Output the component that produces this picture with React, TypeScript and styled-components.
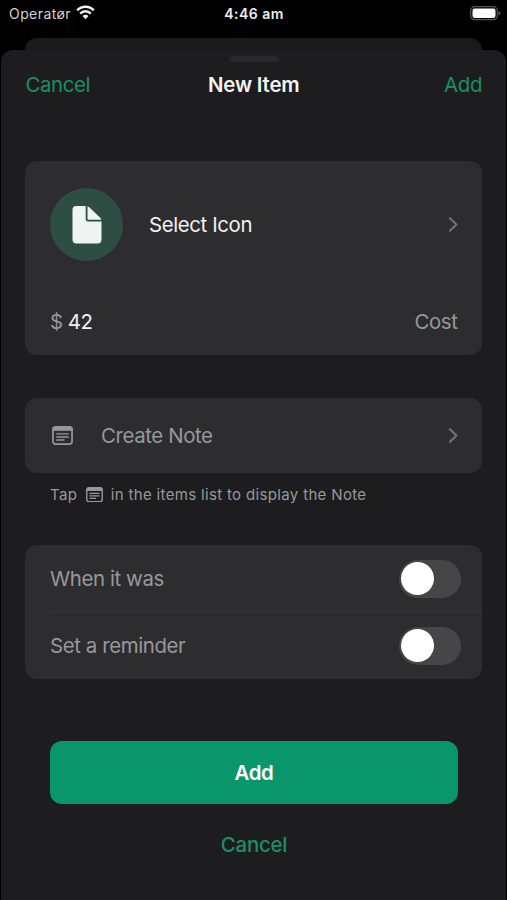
import React, { useState } from "react";
import styled, { createGlobalStyle } from "styled-components";

const GlobalStyle = createGlobalStyle`
  * { box-sizing: border-box; }
  body { margin: 0; background: #000; }
  button { font: inherit; letter-spacing: inherit; border: 0; padding: 0; background: none; }
`;

const Screen = styled.div`
  width: 507px;
  height: 900px;
  overflow: hidden;
  display: flex;
  flex-direction: column;
  background: #000;
  color: #f5f5f6;
  font-family: Inter, "Liberation Sans", sans-serif;
  font-size: 20.4px;
  line-height: 26px;
  letter-spacing: -0.38px;
`;

const StatusBar = styled.header`
  height: 38px;
  flex: none;
  display: grid;
  grid-template-columns: 1fr auto 1fr;
  align-items: start;
  padding: 4px 6px 0 7px;
  font-size: 14px;
  line-height: 20px;
  svg { display: block; }
`;
const Carrier = styled.div`
  display: flex;
  gap: 5px;
  padding-left: 2px;
  color: #d2d2d2;
  letter-spacing: 0.42px;
  svg { margin-top: 1px; }
`;
const Clock = styled.div`
  font-weight: 600;
  color: #eee;
  letter-spacing: 0.45px;
`;
const BatterySlot = styled.div`
  justify-self: end;
  padding-top: 2px;
`;

const BackSheet = styled.div`
  height: 12px;
  flex: none;
  margin: 0 25px;
  border-radius: 12px 12px 0 0;
  background: #1a1a1b;
`;
const Sheet = styled.main`
  flex: 1;
  display: flex;
  flex-direction: column;
  margin: 0 1px;
  padding: 6px 24px 0;
  border-radius: 12px 12px 0 0;
  background: #1d1d1f;
`;
const Grabber = styled.div`
  width: 49px;
  height: 6px;
  flex: none;
  align-self: center;
  margin-left: 1px;
  border-radius: 3px;
  background: #29292b;
`;
const NavBar = styled.nav`
  display: grid;
  grid-template-columns: 1fr auto 1fr;
  margin-top: 10px;
  padding-left: 0.5px;
  height: 26px;
`;
const Title = styled.h1`
  margin: 0;
  font-size: inherit;
  font-weight: 600;
  letter-spacing: -0.18px;
`;
const TextButton = styled.button<{ $end?: boolean; $medium?: boolean }>`
  justify-self: ${(p) => (p.$end ? "end" : "start")};
  font-weight: ${(p) => (p.$medium ? 500 : 400)};
  letter-spacing: ${(p) => (p.$medium ? "-0.2px" : "inherit")};
  color: #189068;
`;

const Card = styled.section<{ $gap: number }>`
  flex: none;
  margin-top: ${(p) => p.$gap}px;
  border-radius: 12px;
  background: #2d2d2f;
  color: #98989b;
`;
const IconRow = styled.div`
  height: 127px;
  display: flex;
  align-items: center;
  padding: 0 23px 0 25px;
`;
const IconDisc = styled.div`
  width: 73px;
  height: 73px;
  display: grid;
  place-items: center;
  border-radius: 50%;
  background: #2e4e44;
`;
const RowLabel = styled.span<{ $offset: number; $bright?: boolean }>`
  flex: 1;
  margin-left: ${(p) => p.$offset}px;
  color: ${(p) => (p.$bright ? "#f1f1f2" : "inherit")};
`;
const CostRow = styled.div`
  height: 67px;
  display: flex;
  align-items: center;
  padding: 0 24.5px 0 25px;
`;
const Amount = styled.span`
  flex: 1;
  margin-left: 5px;
  color: #f1f1f2;
`;
const NoteRow = styled.div`
  height: 75px;
  display: flex;
  align-items: center;
  padding: 0 23px 0 27px;
`;
const Hint = styled.p`
  display: flex;
  align-items: center;
  margin: 11px 0 0 25px;
  height: 21px;
  font-size: 15px;
  letter-spacing: 0.34px;
  color: #98989b;
  svg { margin: 0 8px 0 8.5px; }
`;
const SwitchRow = styled.label`
  height: 67px;
  display: flex;
  align-items: center;
  justify-content: space-between;
  margin-left: 25px;
  padding-right: 21.5px;
  &:not(:last-child) { box-shadow: inset 0 -1px #363638; }
`;
const Switch = styled.button<{ $on: boolean }>`
  width: 62px;
  height: 38px;
  display: flex;
  align-items: center;
  justify-content: ${(p) => (p.$on ? "flex-end" : "flex-start")};
  padding: 0 2px;
  border-radius: 19px;
  background: ${(p) => (p.$on ? "#0b966b" : "#464649")};
`;
const Knob = styled.span`
  width: 33px;
  height: 33px;
  border-radius: 50%;
  background: #fff;
`;
const Actions = styled.div`
  display: flex;
  flex-direction: column;
  align-items: stretch;
  gap: 28px;
  margin: 62px 24px 0 25px;
  text-align: center;
`;
const PrimaryButton = styled.button`
  height: 63px;
  border-radius: 12px;
  background: #0a966b;
  color: #fff;
  font-weight: 600;
`;

const Chevron = () => (
  <svg width="11" height="17" viewBox="0 0 11 17" fill="none">
    <path d="M2 2.2 8.4 8.5 2 14.8" stroke="#707073" strokeWidth="2.3" strokeLinecap="round" strokeLinejoin="round" />
  </svg>
);

const NoteIcon = ({ width }: { width: number }) => (
  <svg width={width} height={(width * 20) / 22} viewBox="0 0 22 20" fill="none" stroke="#98989b">
    <rect x="1" y="1" width="20" height="18" rx="2.7" strokeWidth="1.8" />
    <path d="M1 4.5V3.2Q1 1 3.2 1h15.6Q21 1 21 3.2v1.3Z" fill="#98989b" strokeWidth="1.2" />
    <path d="M5 8.3h12M5 11.5h12M5 14.7h7.5" strokeWidth="1.4" strokeLinecap="round" />
  </svg>
);

const DocumentIcon = () => (
  <svg width="30" height="38" viewBox="0 0 30 38" fill="#eef4f2">
    <path d="M4 0H13.7V13.2Q13.7 15.6 16.1 15.6H29.5V33.5Q29.5 37.5 25.5 37.5H4.5Q.5 37.5.5 33.5V4Q.5 0 4 0Z" />
    <path d="M15.5 .2Q16.5 .4 17.5 1.4L28.2 11.8Q29.2 12.8 29.4 13.7H16.3Q15.5 13.7 15.5 12.9Z" />
  </svg>
);

const WifiIcon = () => (
  <svg width="19" height="15" viewBox="0 0 19 15" fill="none" stroke="#f2f2f2" strokeWidth="2.5">
    <path d="M1.2 5.3C5.8.5 13.2.5 17.8 5.3M4.2 8.6C7.2 5.6 11.8 5.6 14.8 8.6" />
    <path d="M6.5 11.1Q9.5 8.6 12.5 11.1L9.5 14.2Z" fill="#f2f2f2" stroke="none" />
  </svg>
);

const BatteryIcon = () => (
  <svg width="31" height="15" viewBox="0 0 31 15">
    <rect x=".7" y=".7" width="26.6" height="13" rx="4" fill="none" stroke="#555" strokeWidth="1.2" />
    <rect x="2.5" y="2.4" width="23" height="9.6" rx="2.3" fill="#fff" />
    <path d="M28.6 5v4.6q1.7-.6 1.7-2.3t-1.7-2.3Z" fill="#606060" />
  </svg>
);

function ToggleRow({ label }: { label: string }) {
  const [on, setOn] = useState(false);
  return (
    <SwitchRow>
      {label}
      <Switch type="button" role="switch" aria-checked={on} aria-label={label} $on={on} onClick={() => setOn(!on)}>
        <Knob />
      </Switch>
    </SwitchRow>
  );
}

export default function App() {
  return (
    <>
      <GlobalStyle />
      <Screen>
        <StatusBar>
          <Carrier>Operatør <WifiIcon /></Carrier>
          <Clock>4:46 am</Clock>
          <BatterySlot><BatteryIcon /></BatterySlot>
        </StatusBar>
        <BackSheet />
        <Sheet>
          <Grabber />
          <NavBar>
            <TextButton>Cancel</TextButton>
            <Title>New Item</Title>
            <TextButton $end>Add</TextButton>
          </NavBar>
          <Card $gap={63}>
            <IconRow>
              <IconDisc><DocumentIcon /></IconDisc>
              <RowLabel $offset={26} $bright>Select Icon</RowLabel>
              <Chevron />
            </IconRow>
            <CostRow>
              <span>$</span>
              <Amount>42</Amount>
              <span>Cost</span>
            </CostRow>
          </Card>
          <Card $gap={43}>
            <NoteRow>
              <NoteIcon width={21} />
              <RowLabel $offset={28}>Create Note</RowLabel>
              <Chevron />
            </NoteRow>
          </Card>
          <Hint>
            <span>Tap</span>
            <NoteIcon width={17} />
            <span>in the items list to display the Note</span>
          </Hint>
          <Card $gap={40}>
            <ToggleRow label="When it was" />
            <ToggleRow label="Set a reminder" />
          </Card>
          <Actions>
            <PrimaryButton>Add</PrimaryButton>
            <TextButton $medium>Cancel</TextButton>
          </Actions>
        </Sheet>
      </Screen>
    </>
  );
}
